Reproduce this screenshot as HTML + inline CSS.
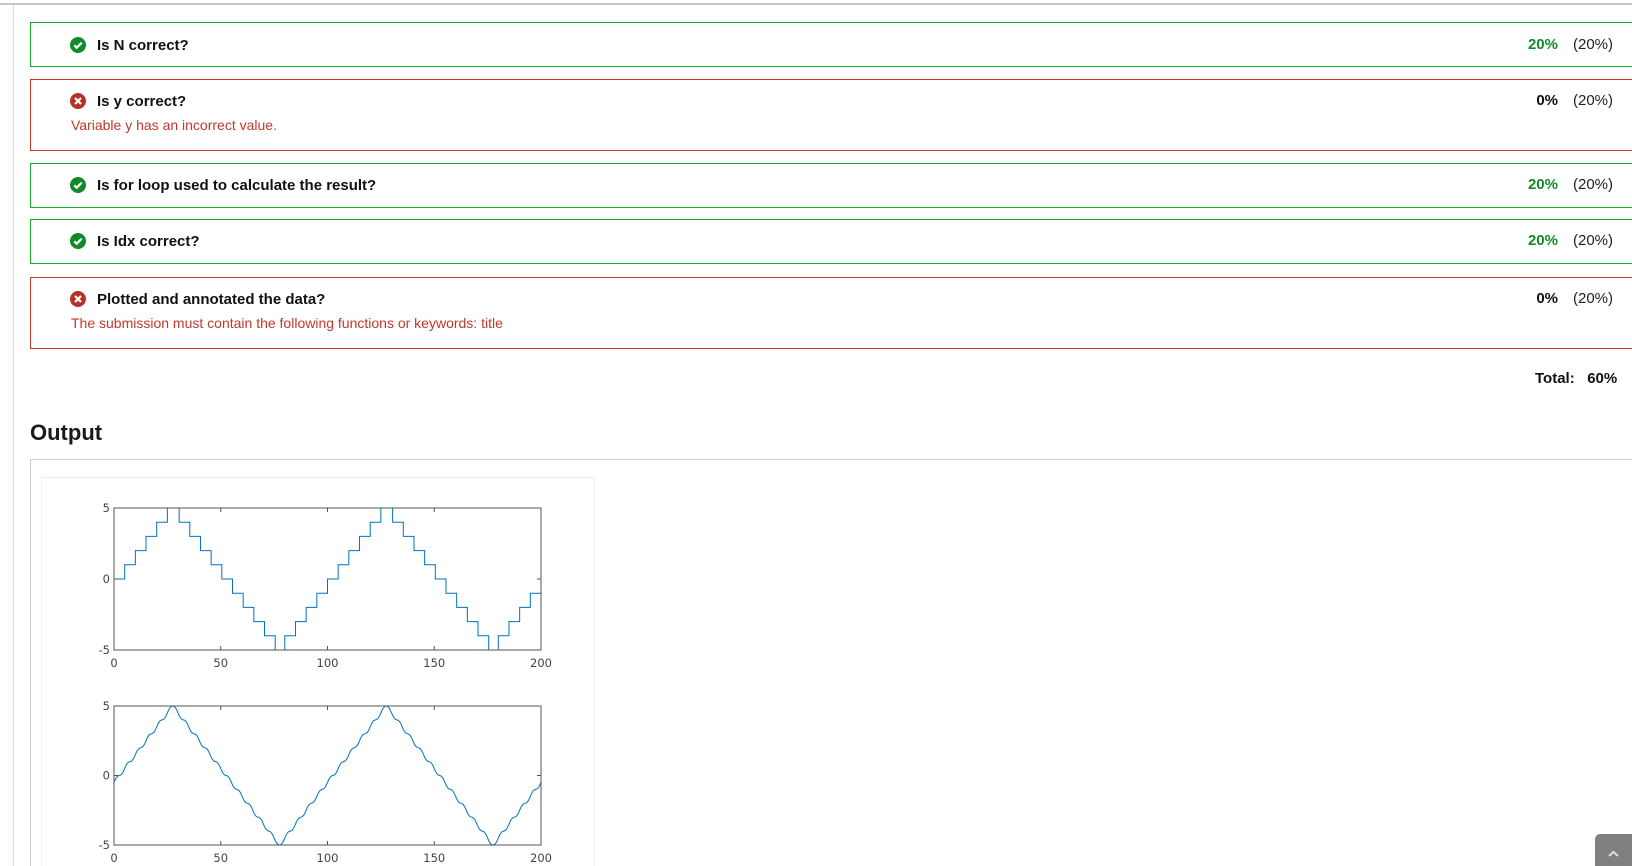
<!DOCTYPE html>
<html style="height:866px;overflow:hidden"><head><meta charset="utf-8"><style>
html,body{height:866px;overflow:hidden}
body{margin:0;width:1632px;background:#fff;font-family:"Liberation Sans",Arial,sans-serif;position:relative}
.wrap{position:absolute;left:0;top:0;width:1632px;height:866px;overflow:hidden}
.topline{position:absolute;left:0;top:3px;width:1632px;height:2px;background:#c8c8c8}
.vline{position:absolute;left:13px;top:5px;width:1px;height:861px;background:#ddd}
.box{position:absolute;left:30px;width:1610px;box-sizing:border-box;border:1px solid}
.ok{border-color:#1aaa2a}.bad{border-color:#d0392b}
.t{position:absolute;left:70px;font-size:15px;font-weight:bold;color:#111;display:flex;align-items:center;height:18px}
.t svg{margin-right:11px}
.err{position:absolute;left:71px;font-size:14px;color:#c0392b}
.sc{position:absolute;right:74px;font-size:15px;font-weight:bold}
.mx{position:absolute;left:1573px;font-size:15px;color:#222}
.ax text{font-family:"DejaVu Sans",sans-serif;font-size:11.5px;fill:#444}
</style></head><body><div class="wrap">
<div class="topline"></div><div class="vline"></div>

<div class="box ok" style="top:22px;height:45px"></div>
<div class="t" style="top:36px"><svg width="16" height="16" viewBox="0 0 16 16"><circle cx="8" cy="8" r="8" fill="#128a2a"/><path d="M4.3 8.3l2.4 2.4 5-5" stroke="#fff" stroke-width="2.2" fill="none"/></svg>Is N correct?</div>
<div class="sc" style="top:36px;color:#138a2a">20%</div><div class="mx" style="top:36px">(20%)</div>

<div class="box bad" style="top:79px;height:72px"></div>
<div class="t" style="top:92px"><svg width="16" height="16" viewBox="0 0 16 16"><circle cx="8" cy="8" r="8" fill="#b5322a"/><path d="M5 5l6 6M11 5l-6 6" stroke="#fff" stroke-width="2.2"/></svg>Is y correct?</div>
<div class="err" style="top:117px">Variable y has an incorrect value.</div>
<div class="sc" style="top:92px;color:#111">0%</div><div class="mx" style="top:92px">(20%)</div>

<div class="box ok" style="top:163px;height:45px"></div>
<div class="t" style="top:176px"><svg width="16" height="16" viewBox="0 0 16 16"><circle cx="8" cy="8" r="8" fill="#128a2a"/><path d="M4.3 8.3l2.4 2.4 5-5" stroke="#fff" stroke-width="2.2" fill="none"/></svg>Is for loop used to calculate the result?</div>
<div class="sc" style="top:176px;color:#138a2a">20%</div><div class="mx" style="top:176px">(20%)</div>

<div class="box ok" style="top:219px;height:45px"></div>
<div class="t" style="top:232px"><svg width="16" height="16" viewBox="0 0 16 16"><circle cx="8" cy="8" r="8" fill="#128a2a"/><path d="M4.3 8.3l2.4 2.4 5-5" stroke="#fff" stroke-width="2.2" fill="none"/></svg>Is Idx correct?</div>
<div class="sc" style="top:232px;color:#138a2a">20%</div><div class="mx" style="top:232px">(20%)</div>

<div class="box bad" style="top:277px;height:72px"></div>
<div class="t" style="top:290px"><svg width="16" height="16" viewBox="0 0 16 16"><circle cx="8" cy="8" r="8" fill="#b5322a"/><path d="M5 5l6 6M11 5l-6 6" stroke="#fff" stroke-width="2.2"/></svg>Plotted and annotated the data?</div>
<div class="err" style="top:315px">The submission must contain the following functions or keywords: title</div>
<div class="sc" style="top:290px;color:#111">0%</div><div class="mx" style="top:290px">(20%)</div>

<div style="position:absolute;left:1535px;top:370px;font-size:15px;font-weight:bold;color:#111">Total:&nbsp;&nbsp;&nbsp;60%</div>

<div style="position:absolute;left:30px;top:420px;font-size:22px;font-weight:bold;color:#1a1a1a">Output</div>
<div style="position:absolute;left:30px;top:459px;width:1610px;height:420px;border-top:1px solid #ccc;border-left:1px solid #ccc"></div>
<div style="position:absolute;left:41px;top:477px;width:552px;height:400px;border-top:1px solid #eee;border-left:1px solid #eee;border-right:1px solid #eee"></div>

<svg class="ax" style="position:absolute;left:0;top:0" width="1632" height="866">
<g id="g1"></g><g id="g2"></g>
</svg>
<div style="position:absolute;left:1595px;top:834px;width:37px;height:32px;background:#808080;border-top-left-radius:5px"><svg width="37" height="32"><path d="M14 22l4.5-4 4.5 4" stroke="#ddd" stroke-width="2" fill="none"/></svg></div>
</div>
<script>
function tri(x){var p=((x-27.5)%100+100)%100;return p<=50?5-0.2*p:-5+0.2*(p-50);}
function plot(g,top,bot,fn,step){
 var L=114,R=541,sx=(R-L)/200,sy=(bot-top)/10;
 var X=function(x){return L+x*sx},Y=function(y){return top+(5-y)*sy};
 var s='';var d='';
 if(step){var prev=null;for(var x=0;x<=200;x+=0.5){var y=fn(x);if(prev===null)d+='M'+X(x)+' '+Y(y);else{if(y!==prev)d+='L'+X(x)+' '+Y(prev);d+='L'+X(x)+' '+Y(y);}prev=y;}}
 else{for(var x=0;x<=200;x+=0.5){d+=(x?'L':'M')+X(x).toFixed(1)+' '+Y(fn(x)).toFixed(2);}}
 s+='<path d="'+d+'" fill="none" stroke="#0072BD" stroke-width="1"/>';
 s+='<rect x="'+L+'" y="'+top+'" width="'+(R-L)+'" height="'+(bot-top)+'" fill="none" stroke="#555" stroke-width="1"/>';
 [0,50,100,150,200].forEach(function(v){var xx=X(v);s+='<line x1="'+xx+'" y1="'+bot+'" x2="'+xx+'" y2="'+(bot-4)+'" stroke="#555"/><line x1="'+xx+'" y1="'+top+'" x2="'+xx+'" y2="'+(top+4)+'" stroke="#555"/>';s+='<text x="'+xx+'" y="'+(bot+17)+'" text-anchor="middle">'+v+'</text>';});
 [5,0,-5].forEach(function(v){var yy=Y(v);s+='<line x1="'+L+'" y1="'+yy+'" x2="'+(L+4)+'" y2="'+yy+'" stroke="#555"/><line x1="'+R+'" y1="'+yy+'" x2="'+(R-4)+'" y2="'+yy+'" stroke="#555"/>';s+='<text x="'+(L-4)+'" y="'+(yy+4)+'" text-anchor="end">'+v+'</text>';});
 document.getElementById(g).innerHTML=s;
}
plot('g1',508,650,function(x){return Math.max(-5,Math.min(5,Math.round(tri(x)+0.01)))},true);
plot('g2',706,845,function(x){var t=tri(x);var y=t-0.8*Math.sin(2*Math.PI*t)/(2*Math.PI);return Math.max(-5,Math.min(5,y));},false);
</script>
</body></html>
